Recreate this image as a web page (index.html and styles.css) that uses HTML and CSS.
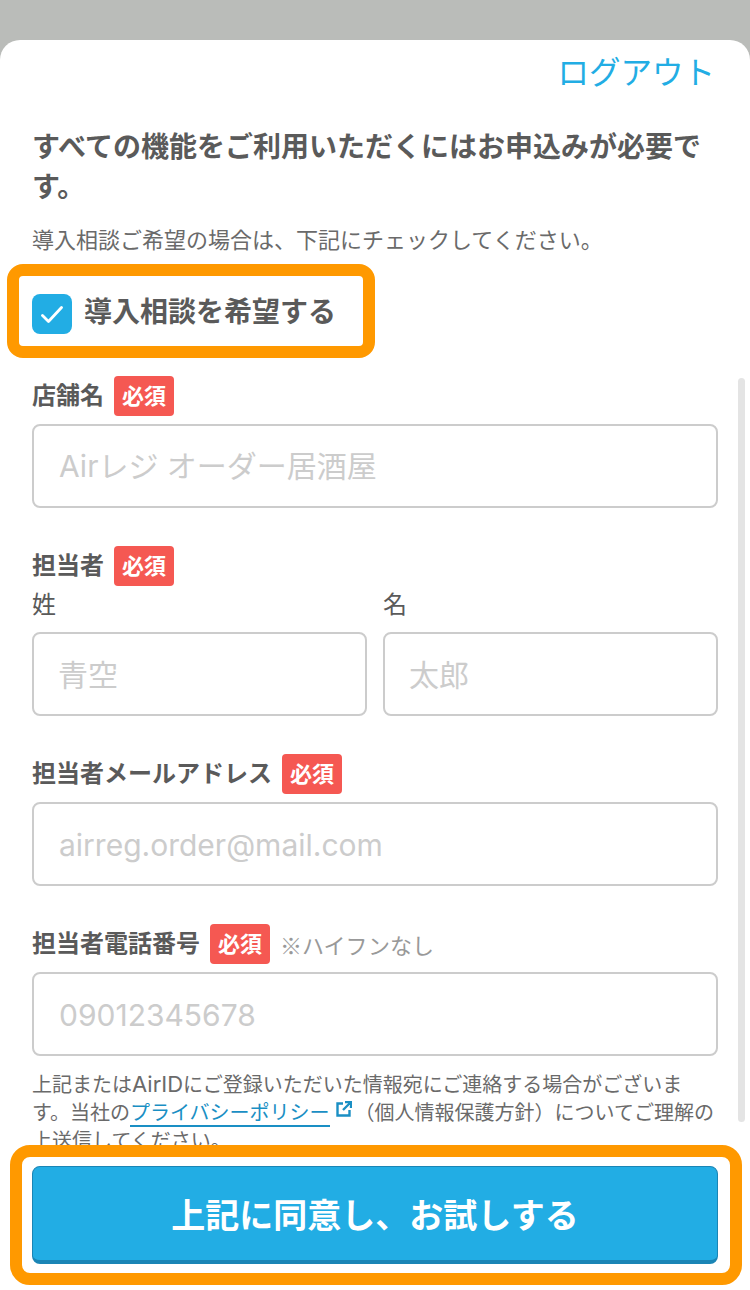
FILE: index.html
```html
<!DOCTYPE html>
<html lang="ja">
<head>
<meta charset="utf-8">
<title>導入相談</title>
<link rel="stylesheet" href="styles.css">
</head>
<body>
<div class="sheet">
  <div class="scroll">
    <div class="logout-row"><a class="logout">ログアウト</a></div>
    <h1 class="title">すべての機能をご利用いただくにはお申込みが必要です。</h1>
    <p class="lead">導入相談ご希望の場合は、下記にチェックしてください。</p>
    <div class="check-hl">
      <span class="checkbox">
        <svg class="check-icon" viewBox="0 0 22 17" width="22" height="17"><path d="M1.5 9.5l6 6L20.5 1.5" fill="none" stroke="#fff" stroke-width="2.8" stroke-linecap="round" stroke-linejoin="round"/></svg>
      </span>
      <span class="check-label">導入相談を希望する</span>
    </div>

    <div class="field f-shop">
      <div class="label-row"><span class="label">店舗名</span><span class="req">必須</span></div>
      <div class="input input-mixed"><span class="ph">Airレジ オーダー居酒屋</span></div>
    </div>

    <div class="field f-name">
      <div class="label-row"><span class="label">担当者</span><span class="req">必須</span></div>
      <div class="two">
        <div class="col">
          <div class="sublabel">姓</div>
          <div class="input input-cjk"><span class="ph">青空</span></div>
        </div>
        <div class="col">
          <div class="sublabel">名</div>
          <div class="input input-cjk"><span class="ph">太郎</span></div>
        </div>
      </div>
    </div>

    <div class="field f-mail">
      <div class="label-row"><span class="label">担当者メールアドレス</span><span class="req">必須</span></div>
      <div class="input input-latin"><span class="ph">airreg.order@mail.com</span></div>
    </div>

    <div class="field f-tel">
      <div class="label-row"><span class="label">担当者電話番号</span><span class="req">必須</span><span class="hint">※ハイフンなし</span></div>
      <div class="input input-latin"><span class="ph">09012345678</span></div>
    </div>

    <p class="note">上記または<span class="latin">AirID</span>にご登録いただいた情報宛にご連絡する場合がございます。当社の<a class="link">プライバシーポリシー</a><svg class="ext" viewBox="0 0 16 16" width="16" height="16"><path d="M7 2.5H1.5v12h12V9" fill="none" stroke="#1a8fc4" stroke-width="2.4"/><path d="M9 1h6v6M14.5 1.5L7 9" fill="none" stroke="#1a8fc4" stroke-width="2.4"/></svg>（個人情報保護方針）についてご理解の上送信してください。</p>
  </div>
  <div class="footer">
    <button class="submit">上記に同意し、お試しする</button>
  </div>
  <div class="scrollbar"></div>
</div>
</body>
</html>
```

FILE: styles.css
```css
* { box-sizing: border-box; }
html, body { margin: 0; padding: 0; }
body {
  width: 750px;
  height: 1290px;
  overflow: hidden;
  padding-top: 40px;
  background: #babcb9;
  font-family: "Inter", "Noto Sans CJK JP", sans-serif;
  color: #5a5a5a;
}
.sheet {
  position: relative;
  height: 1250px;
  background: #fff;
  border-radius: 20px 20px 0 0;
  display: flex;
  flex-direction: column;
  overflow: hidden;
}
.scroll {
  height: 1105px;
  flex: none;
  overflow: hidden;
  padding: 0 32px;
}
.logout-row {
  display: flex;
  justify-content: flex-end;
  height: 66px;
  align-items: center;
  padding-right: 3px;
}
.logout {
  font-size: 31.5px;
  line-height: 1;
  color: #22ade4;
}
.title {
  margin: 21px 0 0;
  font-size: 28px;
  line-height: 40px;
  font-weight: 700;
  color: #5a5a5a;
}
.lead {
  margin: 18px 0 0;
  font-size: 22px;
  line-height: 30px;
  color: #6a6a6a;
}
.check-hl {
  display: flex;
  align-items: center;
  width: 368px;
  height: 94px;
  margin: 9px 0 0 -25px;
  padding-left: 13px;
  border: 12px solid #ff9900;
  border-radius: 16px;
}
.checkbox {
  flex: none;
  display: flex;
  align-items: center;
  justify-content: center;
  width: 40px;
  height: 40px;
  margin-top: 6px;
  border-radius: 8px;
  background: #22ade4;
}
.check-label {
  margin-top: -2px;
  margin-left: 12px;
  font-size: 28px;
  font-weight: 700;
  color: #5a5a5a;
}
.field { margin-top: 18px; }
.f-name, .f-mail, .f-tel { margin-top: 38px; }
.label-row {
  display: flex;
  align-items: center;
  height: 40px;
  margin-bottom: 8px;
}
.label {
  font-size: 24px;
  line-height: 36px;
  font-weight: 700;
  color: #5a5a5a;
}
.req {
  width: 60px;
  height: 40px;
  margin-left: 10px;
  border-radius: 4px;
  background: #f55852;
  color: #fff;
  font-size: 22px;
  font-weight: 700;
  text-align: center;
  line-height: 40px;
}
.hint {
  margin-left: 10px;
  font-family: "Noto Sans CJK JP", sans-serif;
  font-size: 22px;
  color: #999;
}
.input {
  display: flex;
  align-items: center;
  height: 84px;
  padding-left: 25px;
  border: 2px solid #ccc;
  border-radius: 8px;
  background: #fff;
}
.input-mixed { padding-bottom: 4px; }
.input-cjk { padding-left: 24px; padding-bottom: 3px; }
.input-latin { padding-top: 2px; }
.ph {
  font-size: 30px;
  color: #ccc;
  white-space: nowrap;
}
.two {
  display: flex;
  gap: 16px;
}
.f-name .label-row { margin-bottom: 0; }
.col { flex: 1 1 0; }
.sublabel {
  height: 46px;
  font-size: 24px;
  line-height: 38px;
  color: #5a5a5a;
}
.note {
  margin: 15px 0 0;
  font-size: 20px;
  line-height: 28px;
  color: #6a6a6a;
}
.latin { font-size: 22px; line-height: 1; }
.link {
  color: #1a8fc4;
  border-bottom: 2px solid #1a8fc4;
}
.ext { margin: 0 3px 0 6px; vertical-align: 3px; }
.footer {
  flex: none;
  width: 732px;
  height: 140px;
  margin-left: 10px;
  padding: 9px 0 0 10px;
  border: 12px solid #ff9900;
  border-radius: 20px;
  background: #fff;
}
.submit {
  display: block;
  width: 686px;
  height: 98px;
  padding: 0;
  border: 1px solid #1a85b5;
  border-bottom-width: 4px;
  border-radius: 8px;
  background: #22ade4;
  color: #fff;
  font-family: inherit;
  font-size: 34px;
  font-weight: 700;
}
.scrollbar {
  position: absolute;
  left: 738px;
  top: 338px;
  width: 7px;
  height: 744px;
  border-radius: 4px;
  background: #e4e4e4;
}
```
